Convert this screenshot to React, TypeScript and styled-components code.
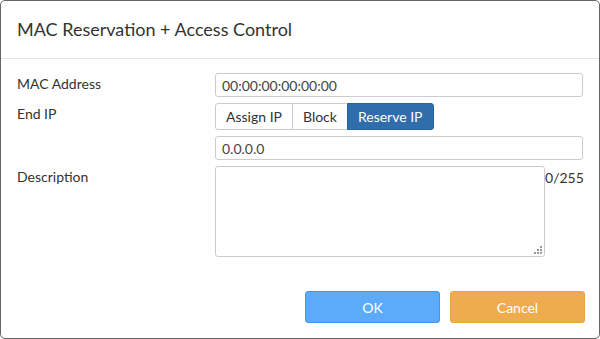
import React, { useState } from 'react'
import styled, { createGlobalStyle } from 'styled-components'

const GlobalStyle = createGlobalStyle`
  html, body {
    margin: 0;
    padding: 0;
    background: #ffffff;
  }
  body {
    font-family: Lato, 'Open Sans', 'Liberation Sans', sans-serif;
    color: #333333;
  }
  * {
    box-sizing: border-box;
  }
`

const StyledDialog = styled.div`
  width: 600px;
  height: 339px;
  border: 1px solid #666666;
  border-radius: 5px;
  background: #ffffff;
  display: flex;
  flex-direction: column;
  overflow: hidden;
`

const StyledHeader = styled.div`
  height: 58px;
  border-bottom: 1px solid #e5e5e5;
  display: flex;
  align-items: center;
  padding: 0 16px 2px;
`

const StyledTitle = styled.h4`
  margin: 0;
  font-size: 18px;
  font-weight: 400;
  color: #333333;
`

const StyledBody = styled.div`
  padding: 14px 15px 0 16px;
  display: flex;
  flex-direction: column;
  gap: 6px;
`

const StyledRow = styled.div`
  display: flex;
  align-items: flex-start;
`

const StyledLabel = styled.label`
  width: 198px;
  flex-shrink: 0;
  font-size: 14px;
  line-height: 20px;
  padding-top: 1px;
`

const StyledField = styled.div`
  flex: 1;
  display: flex;
  align-items: flex-start;
`

const StyledInput = styled.input`
  width: 368px;
  height: 24px;
  border: 1px solid #cccccc;
  border-radius: 3px;
  padding: 0 6px;
  font-family: inherit;
  font-size: 14px;
  color: #444444;
  outline: none;
`

const StyledAreaWrap = styled.div`
  position: relative;
  width: 330px;
  height: 91px;
`

const StyledTextArea = styled.textarea`
  display: block;
  width: 100%;
  height: 100%;
  border: 1px solid #cccccc;
  border-radius: 3px;
  padding: 4px 6px;
  font-family: inherit;
  font-size: 14px;
  color: #444444;
  outline: none;
  resize: none;
`

const StyledGrip = styled.svg`
  position: absolute;
  right: 3px;
  bottom: 3px;
  pointer-events: none;
`

const StyledCounter = styled.span`
  font-size: 14px;
  line-height: 18px;
  padding-top: 3px;
`

const StyledGroup = styled.div`
  display: flex;
`

const StyledToggle = styled.button<{ $active: boolean }>`
  height: 27px;
  padding: 0 10px;
  font-family: inherit;
  font-size: 14px;
  border: 1px solid ${(p) => (p.$active ? '#2a63a0' : '#cccccc')};
  margin-left: -1px;
  background: ${(p) => (p.$active ? '#2f6eab' : '#ffffff')};
  color: ${(p) => (p.$active ? '#ffffff' : '#333333')};
  cursor: pointer;

  &:first-child {
    margin-left: 0;
    border-radius: 3px 0 0 3px;
  }
  &:last-child {
    border-radius: 0 3px 3px 0;
  }
`

const StyledFooter = styled.div`
  margin-top: auto;
  padding: 0 14px 15px;
  display: flex;
  justify-content: flex-end;
  gap: 10px;
`

const StyledButton = styled.button<{ $variant: 'primary' | 'warning' }>`
  width: 135px;
  height: 32px;
  border-radius: 3px;
  font-family: inherit;
  font-size: 14px;
  color: #ffffff;
  border: 1px solid ${(p) => (p.$variant === 'primary' ? '#3f97ee' : '#e9a43f')};
  background: ${(p) => (p.$variant === 'primary' ? '#5cabfa' : '#efac4e')};
  cursor: pointer;
`

const modes = ['Assign IP', 'Block', 'Reserve IP']

// dotted resize grip, like the old-style textarea corner
const gripDots = [
  [6, 0],
  [3, 3],
  [6, 3],
  [0, 6],
  [3, 6],
  [6, 6],
]

const App: React.FC = () => {
  const [mode, setMode] = useState('Reserve IP')
  const [description, setDescription] = useState('')

  return (
    <>
      <GlobalStyle />
      <StyledDialog>
        <StyledHeader>
          <StyledTitle>MAC Reservation + Access Control</StyledTitle>
        </StyledHeader>
        <StyledBody>
          <StyledRow>
            <StyledLabel>MAC Address</StyledLabel>
            <StyledField>
              <StyledInput defaultValue="00:00:00:00:00:00" />
            </StyledField>
          </StyledRow>
          <StyledRow>
            <StyledLabel>End IP</StyledLabel>
            <StyledField>
              <StyledGroup>
                {modes.map((m) => (
                  <StyledToggle
                    key={m}
                    type="button"
                    $active={mode === m}
                    onClick={() => setMode(m)}
                  >
                    {m}
                  </StyledToggle>
                ))}
              </StyledGroup>
            </StyledField>
          </StyledRow>
          <StyledRow>
            <StyledLabel />
            <StyledField>
              <StyledInput defaultValue="0.0.0.0" />
            </StyledField>
          </StyledRow>
          <StyledRow>
            <StyledLabel>Description</StyledLabel>
            <StyledField>
              <StyledAreaWrap>
                <StyledTextArea
                  value={description}
                  maxLength={255}
                  onChange={(e) => setDescription(e.target.value)}
                />
                <StyledGrip width="8" height="8" viewBox="0 0 8 8">
                  {gripDots.map(([x, y]) => (
                    <rect key={`${x}_${y}`} x={x} y={y} width="2" height="2" fill="#9a9a9a" />
                  ))}
                </StyledGrip>
              </StyledAreaWrap>
              <StyledCounter>{description.length}/255</StyledCounter>
            </StyledField>
          </StyledRow>
        </StyledBody>
        <StyledFooter>
          <StyledButton type="button" $variant="primary">
            OK
          </StyledButton>
          <StyledButton type="button" $variant="warning">
            Cancel
          </StyledButton>
        </StyledFooter>
      </StyledDialog>
    </>
  )
}

export default App
